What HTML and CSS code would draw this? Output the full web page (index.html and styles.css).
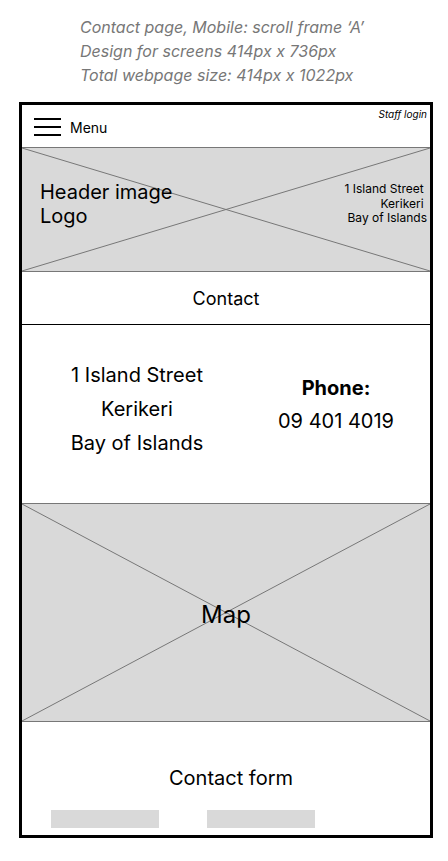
FILE: index.html
```html
<html>
    <head>
        <meta name="viewport" content="width=device-width, initial-scale=1" />
        <link rel="stylesheet" href="styles.css">
    </head>
    <body>
        <div class="caption">
            <p>Contact page, Mobile: scroll frame ‘A’</p>
            <p>Design for screens 414px x 736px</p>
            <p>Total webpage size: 414px x 1022px</p>
        </div>

        <div class="frame">
            <div class="nav">
                <div class="burger"><span></span><span></span><span></span></div>
                <span class="menu-label">Menu</span>
                <span class="staff">Staff login</span>
            </div>

            <div class="placeholder header-image">
                <svg class="cross" viewBox="0 0 100 100" preserveAspectRatio="none">
                    <line x1="0" y1="0" x2="100" y2="100" />
                    <line x1="0" y1="100" x2="100" y2="0" />
                </svg>
                <div class="logo-text">Header image<br/>Logo</div>
                <div class="header-address">1 Island Street 
Kerikeri 
Bay of Islands</div>
            </div>

            <div class="page-title">Contact</div>

            <div class="info">
                <div class="address">
                    <p>1 Island Street</p>
                    <p>Kerikeri</p>
                    <p>Bay of Islands</p>
                </div>
                <div class="phone">
                    <p class="phone-label">Phone:</p>
                    <p>09 401 4019</p>
                </div>
            </div>

            <div class="placeholder map">
                <svg class="cross" viewBox="0 0 100 100" preserveAspectRatio="none">
                    <line x1="0" y1="0" x2="100" y2="100" />
                    <line x1="0" y1="100" x2="100" y2="0" />
                </svg>
                <span class="map-label">Map</span>
            </div>

            <div class="contact-form">
                <h3>Contact form</h3>
                <div class="fields">
                    <div class="field"></div>
                    <div class="field"></div>
                </div>
            </div>
        </div>
    </body>
</html>
```

FILE: styles.css
```css
body {
    margin: 0;
    background: #fff;
    font-family: Inter, 'Noto Sans', sans-serif;
    color: #000;
}
p, h3 {
    margin: 0;
    font-weight: normal;
}

.caption {
    padding: 15px 0 0 80px;
    font-size: 16px;
    line-height: 24px;
    font-style: italic;
    color: #777;
}

.frame {
    margin: 15px 0 0 19px;
    width: 408px;
    height: 730px;
    border: 3px solid #000;
    display: flex;
    flex-direction: column;
}

.nav {
    position: relative;
    height: 42px;
    display: flex;
    align-items: center;
    padding-left: 12px;
    box-sizing: border-box;
}
.burger {
    width: 27px;
    display: flex;
    flex-direction: column;
    gap: 6px;
    margin-top: 2px;
}
.burger span {
    height: 2px;
    background: #000;
}
.menu-label {
    margin-left: 9px;
    font-size: 14px;
    margin-top: 2px;
}
.staff {
    position: absolute;
    top: 3px;
    right: 3px;
    font-size: 10px;
    font-style: italic;
}

.placeholder {
    position: relative;
    background: #d9d9d9;
    border-top: 1px solid #777;
    border-bottom: 1px solid #777;
}
.cross {
    position: absolute;
    top: 0;
    left: 0;
    width: 100%;
    height: 100%;
}
.cross line {
    stroke: #777;
    stroke-width: 1;
    vector-effect: non-scaling-stroke;
}

.header-image {
    height: 123px;
    display: flex;
    align-items: center;
    justify-content: space-between;
}
.logo-text {
    position: relative;
    margin-left: 18px;
    margin-top: -11px;
    font-size: 20px;
    line-height: 24px;
}
.header-address {
    position: relative;
    white-space: pre;
    text-align: right;
    font-size: 12px;
    line-height: 14.5px;
    margin-right: 3px;
    margin-top: -11px;
}

.page-title {
    height: 52px;
    border-bottom: 1px solid #000;
    display: flex;
    align-items: center;
    justify-content: center;
    font-size: 18px;
}

.info {
    height: 178px;
    box-sizing: border-box;
    display: grid;
    grid-template-columns: 230px 1fr;
    padding: 33px 10px 0 0;
    font-size: 20px;
    text-align: center;
}
.address p {
    line-height: 34px;
}
.phone {
    padding-top: 14px;
}
.phone p {
    line-height: 33px;
}
.phone-label {
    font-weight: bold !important;
}

.map {
    height: 217px;
    display: flex;
    align-items: center;
    justify-content: center;
}
.map-label {
    position: relative;
    font-size: 24px;
    margin-top: 3px;
}

.contact-form {
    flex: 1;
    display: flex;
    flex-direction: column;
}
.contact-form h3 {
    margin-top: 44px;
    padding-left: 10px;
    text-align: center;
    font-size: 20px;
    line-height: 24px;
}
.fields {
    display: flex;
    gap: 48px;
    padding-left: 29px;
    margin-top: 20px;
}
.field {
    width: 108px;
    height: 18px;
    background: #d9d9d9;
}
```
